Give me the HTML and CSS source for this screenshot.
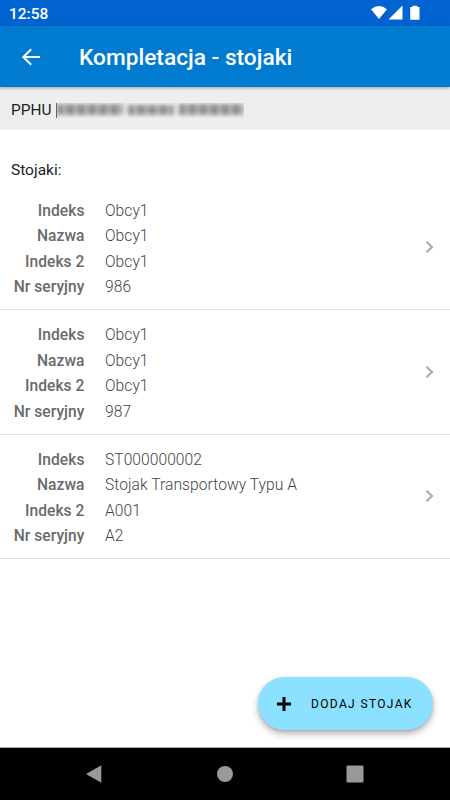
FILE: index.html
```html
<!DOCTYPE html>
<html lang="pl">
<head>
<meta charset="utf-8">
<title>Kompletacja - stojaki</title>
<link rel="stylesheet" href="styles.css">
</head>
<body>
<div class="screen">
  <div class="status">
    <span class="clock">12:58</span>
    <svg class="status-icons" width="50" height="16" viewBox="0 0 50 16" fill="#fff">
      <path d="M1 4.2Q9 -2 17 4.2L9 14Z"/>
      <path d="M18.5 14.5H32.5V.5Z"/>
      <path d="M40.2 2H42.5V.7H47.2V2H49.5V14.8H40.2Z"/>
    </svg>
  </div>
  <header class="appbar">
    <svg class="back" width="20" height="18" viewBox="0 0 20 18" fill="none" stroke="#fff" stroke-width="1.9"><path d="M19 9H2M10.2 1.2L2.3 9L10.2 16.8"/></svg>
    <h1 class="title">Kompletacja - stojaki</h1>
  </header>
  <div class="client">
    <span>PPHU</span>
    <div class="redacted">
      <div class="smudge"><i class="word first"></i><i class="word second"></i><i class="word third"></i></div>
    </div>
  </div>
  <main class="content">
    <h2 class="section">Stojaki:</h2>
    <div class="rack">
      <dl class="fields"><dt>Indeks</dt><dd>Obcy1</dd><dt>Nazwa</dt><dd>Obcy1</dd><dt>Indeks 2</dt><dd>Obcy1</dd><dt>Nr seryjny</dt><dd>986</dd></dl>
      <svg class="chevron" width="9" height="12" viewBox="0 0 9 12"><path d="M1.5 .8L7 6L1.5 11.2"/></svg>
    </div>
    <div class="rack">
      <dl class="fields"><dt>Indeks</dt><dd>Obcy1</dd><dt>Nazwa</dt><dd>Obcy1</dd><dt>Indeks 2</dt><dd>Obcy1</dd><dt>Nr seryjny</dt><dd>987</dd></dl>
      <svg class="chevron" width="9" height="12" viewBox="0 0 9 12"><path d="M1.5 .8L7 6L1.5 11.2"/></svg>
    </div>
    <div class="rack">
      <dl class="fields"><dt>Indeks</dt><dd>ST000000002</dd><dt>Nazwa</dt><dd>Stojak Transportowy Typu A</dd><dt>Indeks 2</dt><dd>A001</dd><dt>Nr seryjny</dt><dd>A2</dd></dl>
      <svg class="chevron" width="9" height="12" viewBox="0 0 9 12"><path d="M1.5 .8L7 6L1.5 11.2"/></svg>
    </div>
  </main>
  <button class="add">
    <svg class="plus" width="14" height="14" viewBox="0 0 14 14"><path d="M7 0V14M0 7H14" stroke="#000" stroke-width="3"/></svg>
    <span>DODAJ STOJAK</span>
  </button>
  <nav class="navbar">
    <svg width="18" height="20" viewBox="0 0 18 20"><path d="M1 10L16.3 1.2V18.8Z"/></svg>
    <svg width="18" height="18" viewBox="0 0 18 18"><circle cx="9" cy="9" r="8"/></svg>
    <svg width="18" height="18" viewBox="0 0 18 18"><rect x=".5" y=".5" width="17" height="17" rx="1"/></svg>
  </nav>
</div>
</body>
</html>
```
FILE: styles.css
```css
* { box-sizing: border-box; }
body { margin: 0; font-family: Roboto, sans-serif; }
.screen {
  position: relative;
  display: flex;
  flex-direction: column;
  width: 450px;
  height: 800px;
  overflow: hidden;
  background: #fff;
}
.status {
  display: flex;
  flex: none;
  justify-content: space-between;
  height: 26px;
  padding: 5px 30px 0 9px;
  background: #0063cf;
  color: #fff;
}
.clock { font-size: 15.5px; line-height: 18px; font-weight: 500; }
.appbar {
  position: relative;
  display: flex;
  flex: none;
  align-items: center;
  height: 61px;
  padding: 0 21px;
  background: #007bd0;
  box-shadow: 0 1px 3px rgba(0, 0, 0, .35);
  color: #fff;
}
.title { margin: 3px 0 0 38px; font-size: 22.7px; line-height: 28px; font-weight: 500; white-space: nowrap; }
.client {
  display: flex;
  flex: none;
  align-items: center;
  gap: 5px;
  height: 43px;
  padding: 3px 11px 0;
  background: #eee;
  font-size: 15.4px;
  color: #222;
}
.redacted { width: 188px; height: 15px; overflow: hidden; border-left: 1.5px solid #666; }
.smudge { display: flex; align-items: center; gap: 5px; height: 14px; filter: blur(2px); }
.word {
  height: 11px;
  background: repeating-linear-gradient(90deg, #8a8a8a 0 4px, #b5b5b5 7px 9px, #8a8a8a 11px);
}
.first { width: 66px; }
.second { width: 46px; height: 10px; }
.third { width: 66px; }
.content { flex: 1; }
.section { margin: 30px 11px 0; font-size: 15.5px; line-height: 20px; font-weight: 400; color: #222; }
.rack {
  display: flex;
  align-items: center;
  justify-content: space-between;
  height: 124.5px;
  padding: 0 16px 0 0;
  border-bottom: 1.5px solid #dedede;
}
.section + .rack { height: 130px; padding-top: 5.5px; }
.fields {
  display: grid;
  grid-template-columns: 84.5px 1fr;
  column-gap: 20.5px;
  grid-auto-rows: 25.4px;
  margin: 5px 0 0;
  font-size: 15.6px;
  line-height: 25.4px;
  white-space: nowrap;
}
dt { text-align: right; font-weight: 500; color: #6a6a6a; letter-spacing: .05px; }
dd { margin: 0; color: #444; font-weight: 300; letter-spacing: .05px; }
.chevron path { fill: none; stroke: #aaa; stroke-width: 2.1; }
.add {
  position: absolute;
  right: 17.5px;
  bottom: 70px;
  display: flex;
  align-items: center;
  gap: 20px;
  width: 175px;
  height: 53px;
  padding: 0 0 0 19.5px;
  border: 0;
  border-radius: 27px;
  background: #8be1ff;
  box-shadow: 0 4px 7px rgba(0, 0, 0, .28), 0 1px 3px rgba(0, 0, 0, .12);
  font: 400 12px/16px Roboto, sans-serif;
  letter-spacing: 1.35px;
  white-space: nowrap;
  color: #000;
}
.plus { flex: none; }
.navbar {
  display: flex;
  flex: none;
  align-items: center;
  justify-content: space-between;
  height: 53px;
  padding: 0 86px 0 85px;
  border-top: 1px solid #aaa;
  background: #000;
}
.navbar svg { fill: #999; }
```
